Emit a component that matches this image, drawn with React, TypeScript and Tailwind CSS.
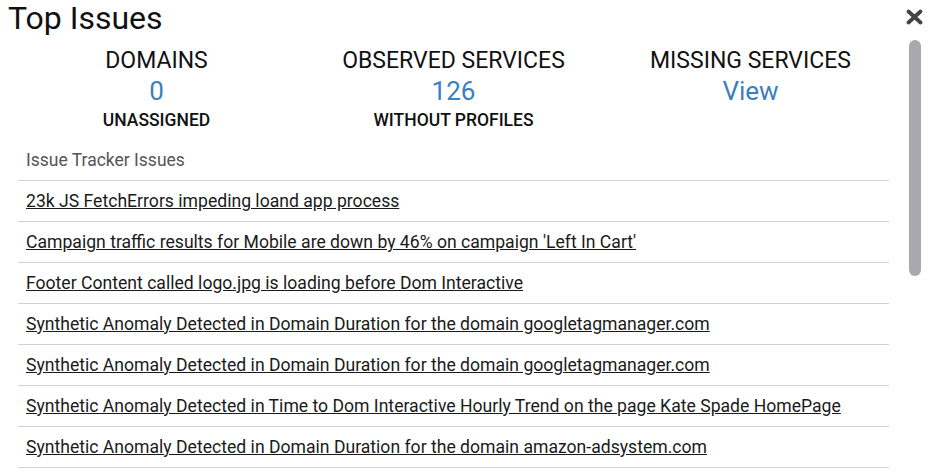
const stats = [
  { label: "DOMAINS", value: "0", sub: "UNASSIGNED" },
  { label: "OBSERVED SERVICES", value: "126", sub: "WITHOUT PROFILES" },
  { label: "MISSING SERVICES", value: "View", sub: "" },
];

const issues = [
  "23k JS FetchErrors impeding loand app process",
  "Campaign traffic results for Mobile are down by 46% on campaign 'Left In Cart'",
  "Footer Content called logo.jpg is loading before Dom Interactive",
  "Synthetic Anomaly Detected in Domain Duration for the domain googletagmanager.com",
  "Synthetic Anomaly Detected in Domain Duration for the domain googletagmanager.com",
  "Synthetic Anomaly Detected in Time to Dom Interactive Hourly Trend on the page Kate Spade HomePage",
  "Synthetic Anomaly Detected in Domain Duration for the domain amazon-adsystem.com",
];

export default function App() {
  return (
    <div className="w-[930px] h-[476px] overflow-hidden bg-white text-[#111] font-['Roboto',sans-serif] relative">
      <div className="flex">
        <div className="w-[899px] pl-2">
          <h1 className="text-[32px] leading-[36px] font-normal">Top Issues</h1>

          <div className="grid grid-cols-3 mt-3 text-center">
            {stats.map((s) => (
              <div key={s.label} className="flex flex-col items-center">
                <div className="text-[23px] leading-[26px]">{s.label}</div>
                <div className="mt-[2px] text-[26px] leading-[30px] text-[#3b7fc0]">{s.value}</div>
                <div className="mt-1 h-5 text-[17.5px] leading-5 font-medium">{s.sub}</div>
              </div>
            ))}
          </div>

          <div className="mt-[10px] px-[10px]">
            <div className="px-2 py-2 text-[17.5px] leading-6 text-[#555] border-b border-[#d2d2d2]">
              Issue Tracker Issues
            </div>
            {issues.map((t, i) => (
              <div key={i} className="px-2 py-2 text-[17.6px] leading-6 border-b border-[#d2d2d2]">
                <a href="#" className="underline text-[#1a1a1a]">{t}</a>
              </div>
            ))}
          </div>
        </div>

        <div className="flex-1 flex flex-col items-center">
          <svg width="17" height="16" viewBox="0 0 17 16" className="mt-[9px]">
            <path d="M2.5 2.5 L14.5 13.5 M14.5 2.5 L2.5 13.5" stroke="#444" strokeWidth="3.8" strokeLinecap="round" />
          </svg>
          <div className="mt-[15px] w-3 h-[236px] rounded-full bg-[#a9a9ad]" />
        </div>
      </div>
    </div>
  );
}
